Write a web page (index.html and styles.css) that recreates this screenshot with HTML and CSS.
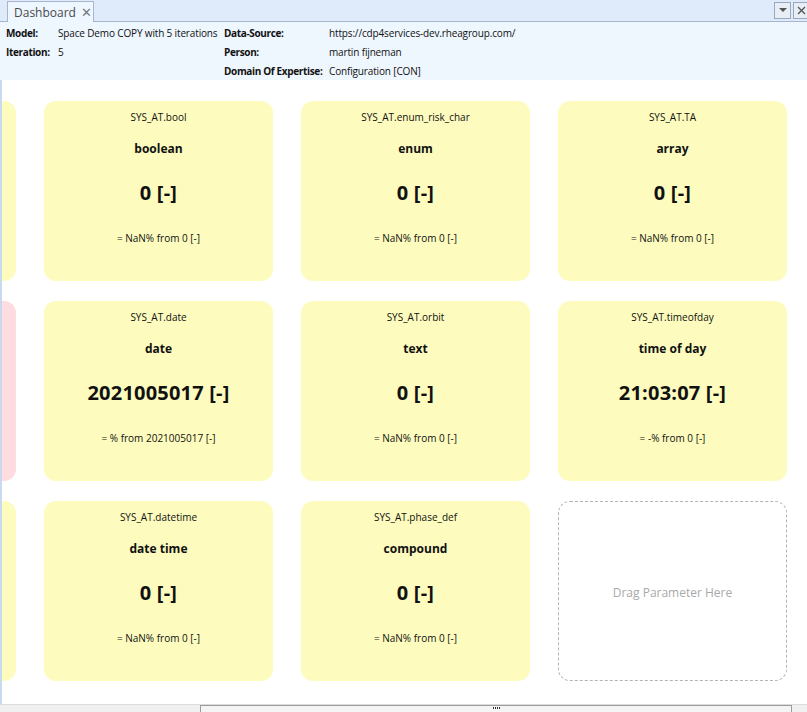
FILE: index.html
```html
<!DOCTYPE html>
<html>
<head>
<meta charset="utf-8">
<link rel="stylesheet" href="styles.css">
</head>
<body>
<div class="window">
  <div class="tabbar">
    <div class="tab"><span class="tab-label">Dashboard</span><span class="tab-close">✕</span></div>
    <div class="tab-buttons">
      <div class="tbtn"><svg width="8" height="5" viewBox="0 0 8 5"><path d="M0 0H8L4 4Z" fill="#555"/></svg></div>
      <div class="tbtn"><svg width="9" height="9" viewBox="0 0 9 9"><path d="M1 1L8 8M8 1L1 8" stroke="#555" stroke-width="1.4"/></svg></div>
    </div>
  </div>
  <div class="info">
    <div class="info-col c1">
      <div class="row"><span class="lbl l1">Model:</span><span>Space Demo COPY with 5 iterations</span></div>
      <div class="row"><span class="lbl l1">Iteration:</span><span>5</span></div>
    </div>
    <div class="info-col c2">
      <div class="row"><span class="lbl l2">Data-Source:</span><span>https://cdp4services-dev.rheagroup.com/</span></div>
      <div class="row"><span class="lbl l2">Person:</span><span>martin fijneman</span></div>
      <div class="row"><span class="lbl l2">Domain Of Expertise:</span><span>Configuration [CON]</span></div>
    </div>
  </div>
  <div class="content">
    <div class="grid">
      <div class="card"></div>
      <div class="card"><div class="t">SYS_AT.bool</div><div class="n">boolean</div><div class="v">0 [-]</div><div class="s">= NaN% from 0 [-]</div></div>
      <div class="card"><div class="t">SYS_AT.enum_risk_char</div><div class="n">enum</div><div class="v">0 [-]</div><div class="s">= NaN% from 0 [-]</div></div>
      <div class="card"><div class="t">SYS_AT.TA</div><div class="n">array</div><div class="v">0 [-]</div><div class="s">= NaN% from 0 [-]</div></div>

      <div class="card pink"></div>
      <div class="card"><div class="t">SYS_AT.date</div><div class="n">date</div><div class="v">2021005017 [-]</div><div class="s">= % from 2021005017 [-]</div></div>
      <div class="card"><div class="t">SYS_AT.orbit</div><div class="n">text</div><div class="v">0 [-]</div><div class="s">= NaN% from 0 [-]</div></div>
      <div class="card"><div class="t">SYS_AT.timeofday</div><div class="n">time of day</div><div class="v">21:03:07 [-]</div><div class="s">= -% from 0 [-]</div></div>

      <div class="card"></div>
      <div class="card"><div class="t">SYS_AT.datetime</div><div class="n">date time</div><div class="v">0 [-]</div><div class="s">= NaN% from 0 [-]</div></div>
      <div class="card"><div class="t">SYS_AT.phase_def</div><div class="n">compound</div><div class="v">0 [-]</div><div class="s">= NaN% from 0 [-]</div></div>
      <div class="card drop"><span>Drag Parameter Here</span></div>
    </div>
  </div>
  <div class="hscroll">
    <div class="thumb"><span class="grip"></span></div>
  </div>
</div>
</body>
</html>
```
FILE: styles.css
```css
html, body {
  margin: 0;
  padding: 0;
  background: #ffffff;
}
body {
  font-family: "Open Sans", "Noto Sans", sans-serif;
  color: #111;
}
.window {
  width: 807px;
  height: 712px;
  display: flex;
  flex-direction: column;
  overflow: hidden;
}
.tabbar {
  height: 21px;
  background: #dfebfa;
  border-bottom: 1px solid #a7b6cc;
  display: flex;
  align-items: flex-end;
  justify-content: space-between;
  flex-shrink: 0;
}
.tab {
  margin-left: 7px;
  height: 21px;
  margin-bottom: -1px;
  width: 87px;
  box-sizing: border-box;
  background: #eef6ff;
  border: 1px solid #a7b6cc;
  border-bottom: none;
  display: flex;
  align-items: center;
  padding-left: 6px;
  gap: 5px;
  font-size: 12px;
  color: #4a4a4a;
}
.tab-close {
  font-size: 13px;
  color: #777;
}
.tab-buttons {
  display: flex;
  gap: 2px;
  align-self: center;
  margin-right: -3px;
}
.tbtn {
  width: 17px;
  height: 17px;
  box-sizing: border-box;
  border: 1px solid #9aa8bb;
  background: #e8eef6;
  display: flex;
  align-items: center;
  justify-content: center;
}
.info {
  background: #eef6fe;
  height: 58px;
  display: flex;
  font-size: 10px;
  letter-spacing: -0.15px;
  padding-top: 1px;
  box-sizing: border-box;
  flex-shrink: 0;
}
.info-col {
  display: flex;
  flex-direction: column;
}
.c1 { margin-left: 6px; width: 218px; flex-shrink: 0; }
.row {
  height: 19px;
  display: flex;
  align-items: center;
  white-space: nowrap;
}
.lbl { font-weight: bold; flex-shrink: 0; letter-spacing: -0.35px; }
.l1 { width: 52px; }
.l2 { width: 105px; }
.content {
  flex: 1;
  border-left: 2px solid #c9daf0;
  overflow: hidden;
  background: #fff;
}
.grid {
  display: grid;
  grid-template-columns: repeat(4, 229px);
  grid-auto-rows: 180px;
  column-gap: 28px;
  row-gap: 20px;
  margin-left: -215px;
  padding-top: 21px;
}
.card {
  background: #fdfcbe;
  border-radius: 12px;
  display: flex;
  flex-direction: column;
  align-items: center;
  text-align: center;
}
.card.pink { background: #ffdcdf; }
.t {
  font-size: 10px;
  margin-top: 9px;
  height: 15px;
}
.n {
  font-size: 12px;
  font-weight: bold;
  margin-top: 15px;
  height: 18px;
}
.v {
  font-size: 20px;
  font-weight: bold;
  margin-top: 21px;
  height: 28px;
  letter-spacing: 0.2px;
}
.s {
  font-size: 10px;
  margin-top: 24px;
}
.card.drop {
  background: #fff;
  border: 1px dashed #b4b4b4;
  justify-content: center;
  font-size: 12px;
  color: #a9a9a9;
  padding-top: 3px;
  box-sizing: border-box;
}
.hscroll {
  height: 7px;
  background: #f0f0f0;
  border-top: 1px solid #dcdcdc;
  flex-shrink: 0;
}
.thumb {
  margin-left: 200px;
  width: 592px;
  height: 7px;
  box-sizing: border-box;
  border: 1px solid #9c9c9c;
  border-bottom: none;
  background: #f4f4f4;
  display: flex;
  justify-content: center;
}
.grip {
  width: 7px;
  height: 2px;
  margin-top: 1px;
  background: repeating-linear-gradient(90deg, #333 0 1px, transparent 1px 2px);
}
```
